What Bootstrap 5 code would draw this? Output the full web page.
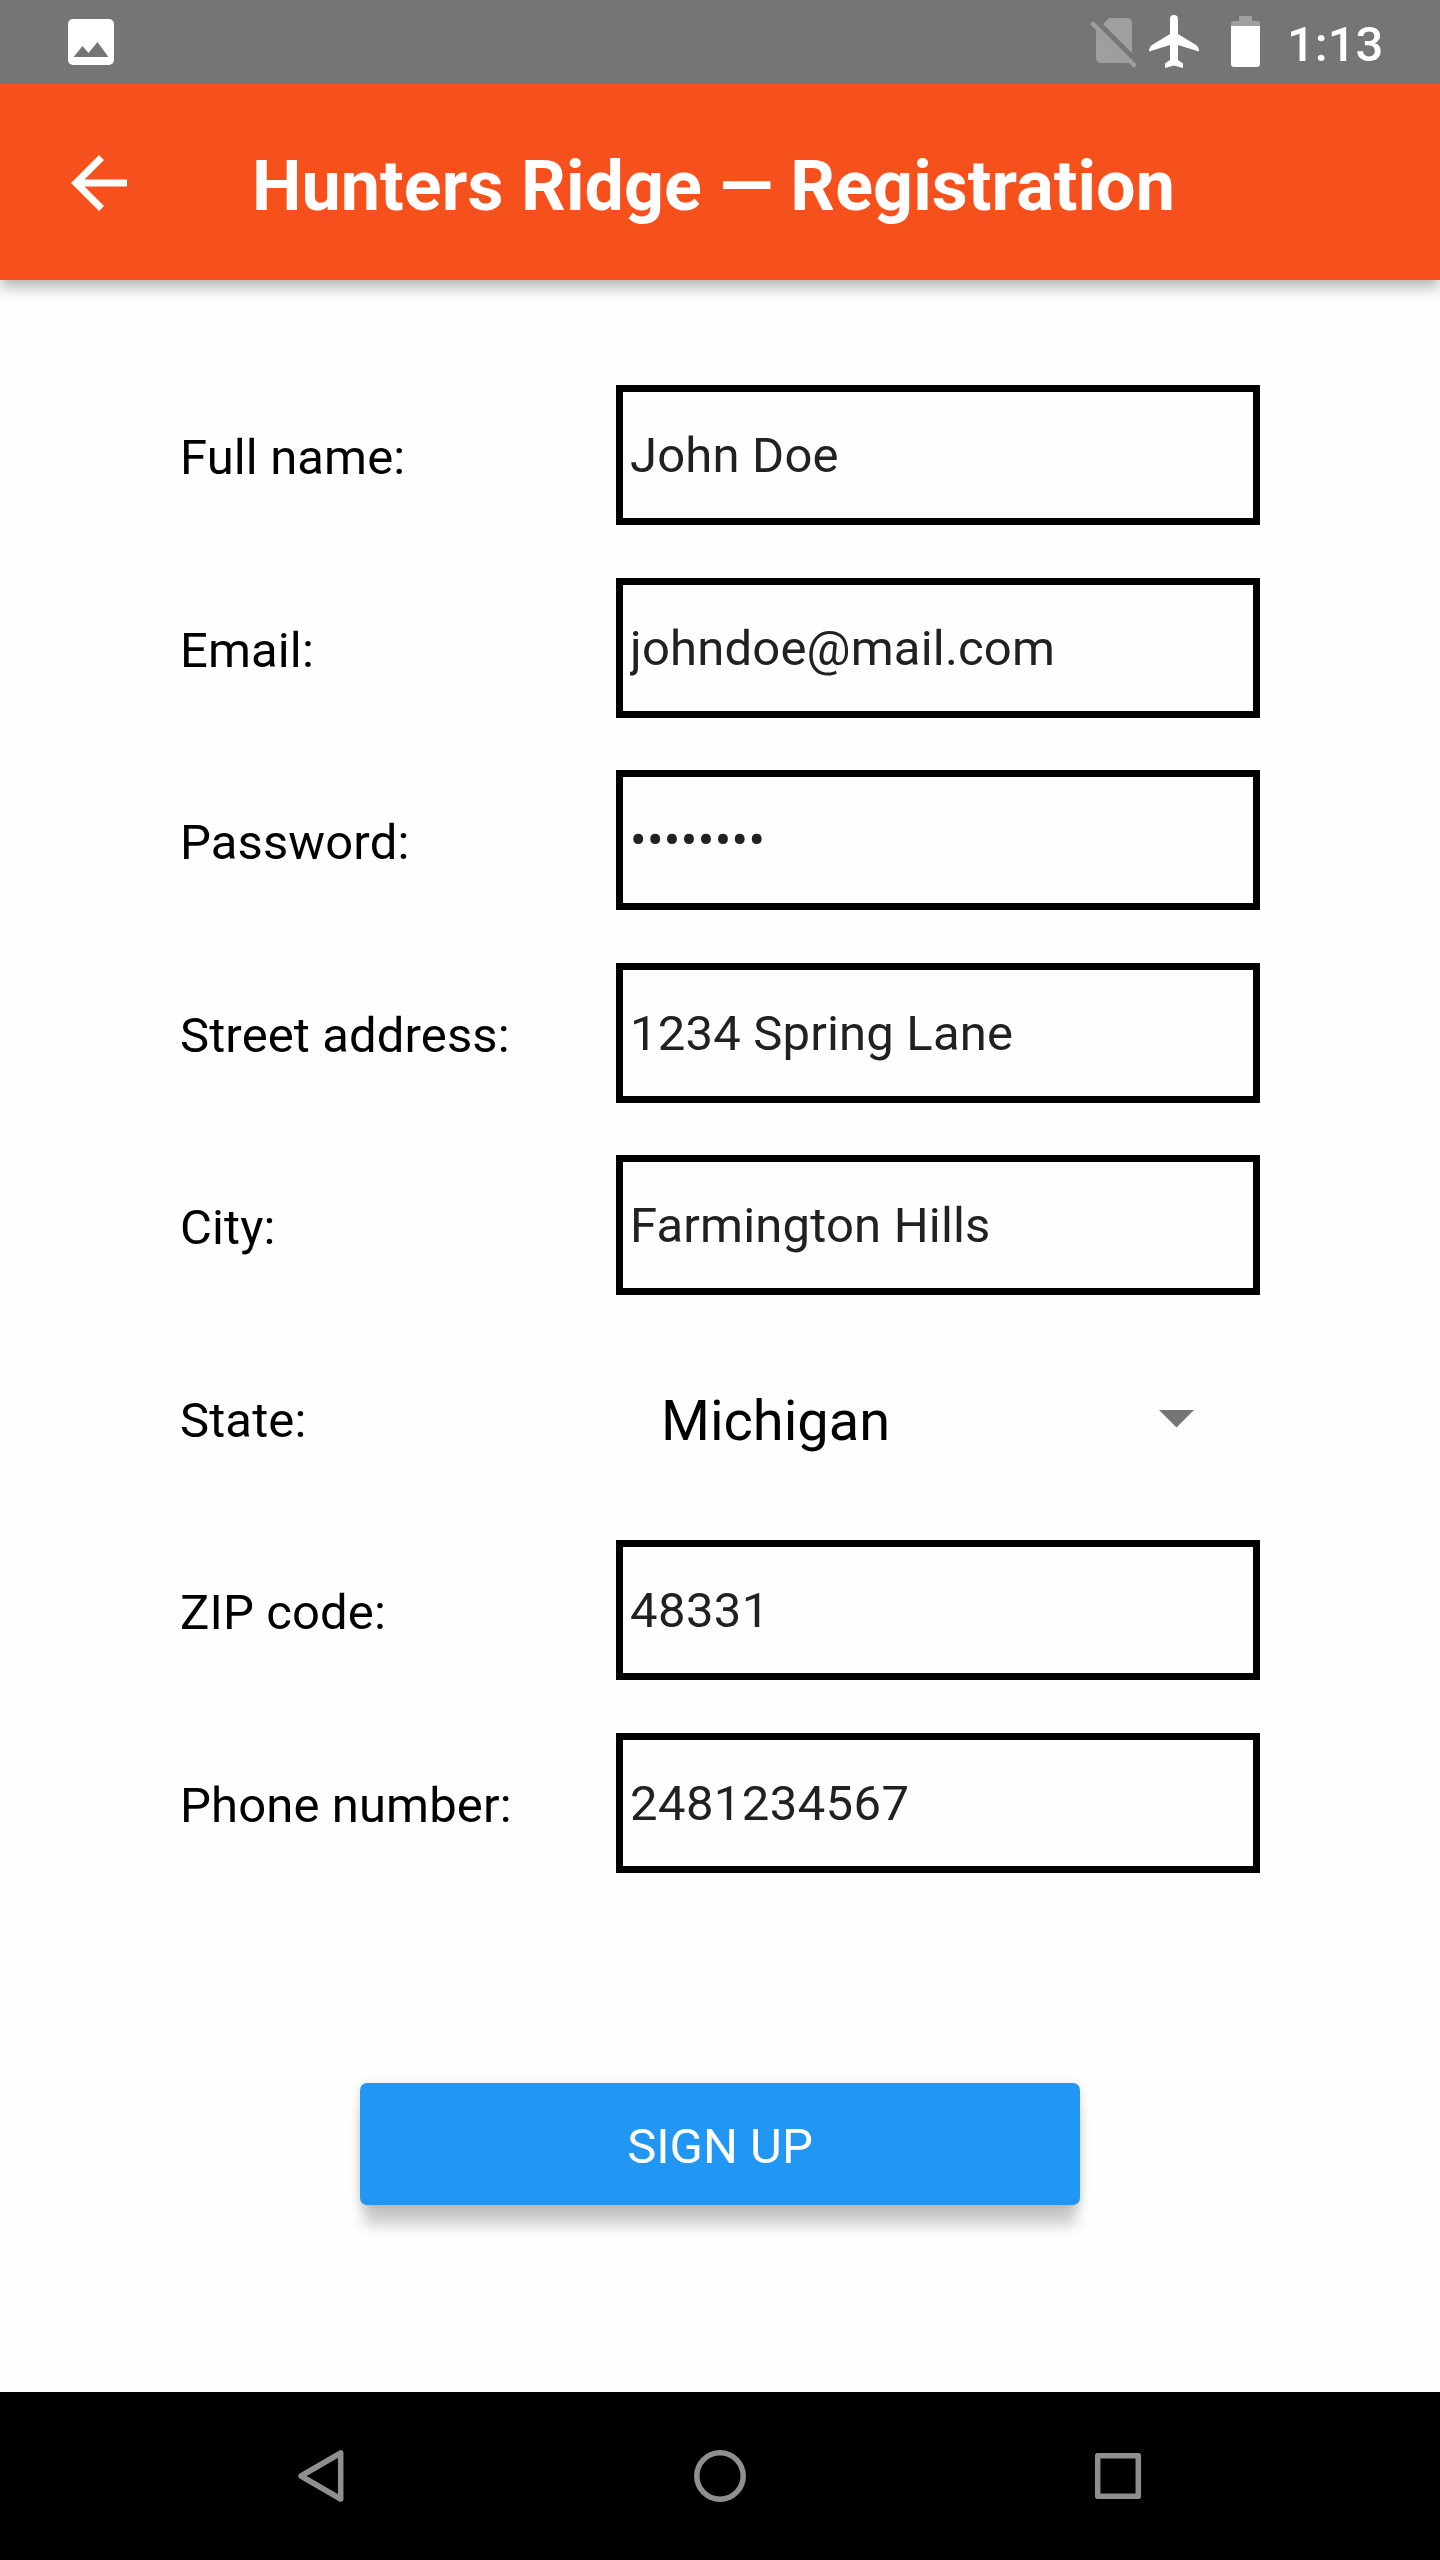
<!DOCTYPE html>
<html lang="en">
<head>
<meta charset="utf-8">
<meta name="viewport" content="width=device-width, initial-scale=1">
<title>Hunters Ridge — Registration</title>
<link href="https://cdn.jsdelivr.net/npm/bootstrap@5.3.0/dist/css/bootstrap.min.css" rel="stylesheet">
<style>
body{font-family:Roboto,sans-serif;background:#fefefe;color:#000;width:1440px;height:2560px;overflow:hidden}
.status-bar{height:84px;background:#757575;color:#fff;padding-left:68px;padding-right:56px}
.clock{font-size:49px;font-weight:500;line-height:58px;padding-top:5px;width:97px}
.app-bar{height:196px;background:#f6511d;padding:10px 0 0;box-shadow:0 7px 14px rgba(0,0,0,.3);clip-path:inset(0 0 -40px 0)}
.app-title{font-size:70px;font-weight:700;line-height:84px;color:#fff;letter-spacing:.08px;padding-bottom:3px}
.form-area{padding:105px 180px 0}
.form-rows{gap:52.5px}
.form-line{height:140px}
.field-label{width:436px;font-size:49px;line-height:58px;padding-top:6px;letter-spacing:.12px}
.field-box,.field-box:focus{width:644px;height:140px;border:7px solid #000;border-radius:0;background:#fefefe;color:#212121;font-size:49px;line-height:58px;padding:1px 7px 0;box-shadow:none;letter-spacing:.18px}
.digits,.digits:focus{letter-spacing:.4px}
.state-picker{width:644px;font-size:56px;line-height:66px;padding:6px 66px 0 45px}
.signup-row{padding-top:210.5px}
.signup{width:720px;height:122px;border:0;border-radius:7px;background:#2196f3;color:#fff;font-size:49px;line-height:58px;padding:6px 0 0;box-shadow:0 24px 14px -4px rgba(0,0,0,.2),0 2px 12px rgba(0,0,0,.14)}
.nav-keys{height:168px;background:#000}
</style>
</head>
<body class="d-flex flex-column">
<header class="status-bar d-flex align-items-center justify-content-between flex-shrink-0">
  <svg width="46" height="84" viewBox="68 0 46 84"><rect x="68" y="19" width="46" height="46" rx="5" fill="#fff"/><path d="M73.500 57L82.500 46L88.500 53L97.500 42L108.500 57Z" fill="#757575"/></svg>
  <div class="d-flex align-items-center">
    <svg width="197" height="84" viewBox="1090 0 197 84">
      <path fill="#9f9f9f" d="M1109 18H1127Q1132 18 1132 23V53L1103 24ZM1096 30L1129 63H1101Q1096 63 1096 58Z"/>
      <path d="M1093 24L1134 65" stroke="#9f9f9f" stroke-width="4.500" stroke-linecap="round"/>
      <path fill="#fff" d="M1170 19Q1170 15 1173.800 15Q1178 15 1178 19V34L1196 45Q1199 47 1199 51.500L1178 45V60L1183 63.500V68L1174 65.500L1165 68V63.500L1170 60V45L1149 51.500Q1149 47 1152 45L1170 34Z"/>
      <path fill="#9f9f9f" d="M1239 16H1252V21H1258Q1260 21 1260 24V27H1231V24Q1231 21 1234 21H1239Z"/>
      <path fill="#fff" d="M1231 26H1260V64Q1260 67 1257 67H1234Q1231 67 1231 64Z"/>
    </svg>
    <div class="clock">1:13</div>
  </div>
</header>
<nav class="app-bar d-flex align-items-center flex-shrink-0">
  <svg class="flex-shrink-0 mb-2" width="252" height="60" viewBox="0 153 252 60" fill="none" stroke="#fff" stroke-width="7"><path d="M101.500 157.500L76 183L101.500 208.500M76 183H127"/></svg>
  <h1 class="app-title m-0">Hunters Ridge — Registration</h1>
</nav>
<main class="form-area flex-grow-1">
  <form>
    <div class="form-rows d-flex flex-column">
      <div class="form-line d-flex align-items-center"><label class="field-label" for="fullname">Full name:</label><input id="fullname" class="form-control field-box" value="John Doe"></div>
      <div class="form-line d-flex align-items-center"><label class="field-label" for="email">Email:</label><input id="email" class="form-control field-box" value="johndoe@mail.com"></div>
      <div class="form-line d-flex align-items-center"><label class="field-label" for="pass">Password:</label><input id="pass" class="form-control field-box digits" value="••••••••"></div>
      <div class="form-line d-flex align-items-center"><label class="field-label" for="street">Street address:</label><input id="street" class="form-control field-box" value="1234 Spring Lane"></div>
      <div class="form-line d-flex align-items-center"><label class="field-label" for="city">City:</label><input id="city" class="form-control field-box" value="Farmington Hills"></div>
      <div class="form-line d-flex align-items-center"><span class="field-label">State:</span>
        <div class="state-picker d-flex align-items-center justify-content-between"><span>Michigan</span><svg class="mb-1" width="35" height="18" viewBox="0 0 35 18"><path d="M0 0H35L17.500 17.500Z" fill="#757575"/></svg></div></div>
      <div class="form-line d-flex align-items-center"><label class="field-label" for="zip">ZIP code:</label><input id="zip" class="form-control field-box digits" value="48331"></div>
      <div class="form-line d-flex align-items-center"><label class="field-label" for="phone">Phone number:</label><input id="phone" class="form-control field-box digits" value="2481234567"></div>
    </div>
    <div class="signup-row d-flex justify-content-center"><button type="button" class="btn signup">SIGN UP</button></div>
  </form>
</main>
<footer class="nav-keys flex-shrink-0">
  <svg class="d-block" width="1440" height="168" viewBox="0 2392 1440 168" fill="none" stroke="#8f8f8f" stroke-width="5.500" stroke-linejoin="round"><path d="M301 2476L340.700 2453V2499Z"/><circle cx="720" cy="2476" r="23.200"/><rect x="1097.700" y="2455.700" width="40.600" height="40.600"/></svg>
</footer>
<script src="https://cdn.jsdelivr.net/npm/bootstrap@5.3.0/dist/js/bootstrap.bundle.min.js"></script>
</body>
</html>
